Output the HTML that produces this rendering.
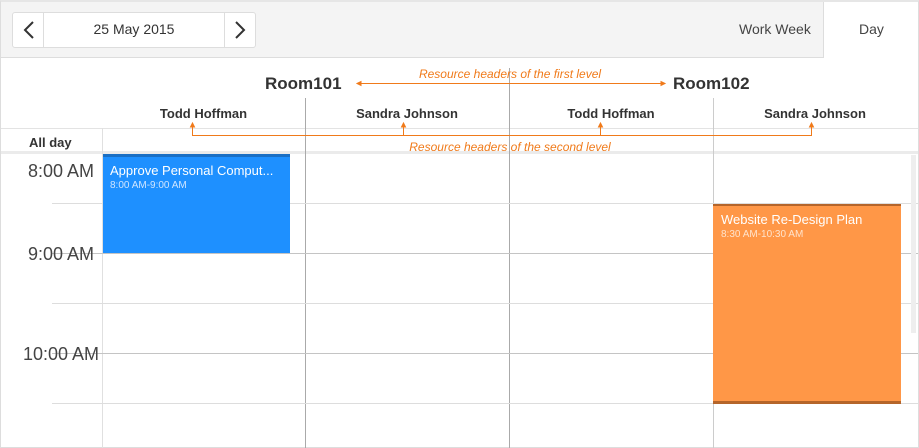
<!DOCTYPE html>
<html><head><meta charset="utf-8"><style>
*{margin:0;padding:0;box-sizing:border-box}
body{width:919px;height:448px;overflow:hidden;background:#fff;font-family:"Liberation Sans",sans-serif;color:#333;position:relative}
.a{position:absolute}
</style></head><body>
<div class="a" style="left:0;top:0;width:919px;height:448px;border:1px solid #ddd;border-top:2px solid #e6e6e6"></div>
<div class="a" style="left:1px;top:2px;width:917px;height:56px;background:#f4f4f4;border-bottom:1px solid #ddd"></div>
<div class="a" style="left:823px;top:2px;width:95px;height:56px;background:#fff;border-left:1px solid #ddd"></div>
<div class="a" style="left:12px;top:12px;width:244px;height:36px;background:#fff;border:1px solid #ddd;border-radius:3px"></div>
<div class="a" style="left:43px;top:13px;width:1px;height:34px;background:#ddd"></div>
<div class="a" style="left:224px;top:13px;width:1px;height:34px;background:#ddd"></div>
<svg class="a" style="left:0;top:0" width="919" height="448">
<polyline points="33,22 25,30 33,38" fill="none" stroke="#333" stroke-width="2"/>
<polyline points="236,22 244,30 236,38" fill="none" stroke="#333" stroke-width="2"/>
</svg>
<div class="a" style="left:44px;top:21px;width:180px;text-align:center;font-size:14px">25 May 2015</div>
<div class="a" style="left:739px;top:21px;font-size:14px;color:#444">Work Week</div>
<div class="a" style="left:859px;top:21px;font-size:14px;color:#444">Day</div>

<div class="a" style="left:265px;top:74px;font-size:17px;font-weight:bold">Room101</div>
<div class="a" style="left:673px;top:74px;font-size:17px;font-weight:bold">Room102</div>
<div class="a" style="left:102px;top:106px;width:203px;text-align:center;font-size:13px;font-weight:bold">Todd Hoffman</div>
<div class="a" style="left:305px;top:106px;width:204px;text-align:center;font-size:13px;font-weight:bold">Sandra Johnson</div>
<div class="a" style="left:509px;top:106px;width:204px;text-align:center;font-size:13px;font-weight:bold">Todd Hoffman</div>
<div class="a" style="left:713px;top:106px;width:204px;text-align:center;font-size:13px;font-weight:bold">Sandra Johnson</div>
<div class="a" style="left:29px;top:135px;font-size:13px;font-weight:bold">All day</div>

<div class="a" style="left:1px;top:128px;width:917px;height:1px;background:#e3e3e3"></div>
<div class="a" style="left:1px;top:151px;width:917px;height:3px;background:#ebebeb"></div>
<div class="a" style="left:102px;top:128px;width:1px;height:320px;background:#e0e0e0"></div>
<div class="a" style="left:305px;top:98px;width:1px;height:350px;background:#aaa"></div>
<div class="a" style="left:509px;top:68px;width:1px;height:380px;background:#aaa"></div>
<div class="a" style="left:713px;top:98px;width:1px;height:350px;background:#ccc"></div>

<div class="a" style="left:52px;top:203px;width:866px;height:1px;background:#ddd"></div>
<div class="a" style="left:52px;top:253px;width:866px;height:1px;background:#c4c4c4"></div>
<div class="a" style="left:52px;top:303px;width:866px;height:1px;background:#ddd"></div>
<div class="a" style="left:52px;top:353px;width:866px;height:1px;background:#c4c4c4"></div>
<div class="a" style="left:52px;top:403px;width:866px;height:1px;background:#ddd"></div>
<div class="a" style="left:911px;top:155px;width:5px;height:178px;background:#eee"></div>

<div class="a" style="left:0;top:161px;width:94px;text-align:right;font-size:18px;color:#444">8:00 AM</div>
<div class="a" style="left:0;top:244px;width:94px;text-align:right;font-size:18px;color:#444">9:00 AM</div>
<div class="a" style="left:0;top:344px;width:99px;text-align:right;font-size:18px;color:#444">10:00 AM</div>

<div class="a" style="left:103px;top:154px;width:187px;height:99px;background:#1e90ff;border-top:3px solid #1a6fc4;color:#fff;padding:6px 7px">
<div style="font-size:13px;white-space:nowrap;overflow:hidden">Approve Personal Comput...</div>
<div style="font-size:10px;color:#cfe5ff;margin-top:2px">8:00 AM-9:00 AM</div></div>
<div class="a" style="left:713px;top:204px;width:188px;height:200px;background:#ff9747;border-top:2px solid #b5652a;border-bottom:3px solid #b5652a;color:#fff;padding:6px 8px">
<div style="font-size:13px">Website Re-Design Plan</div>
<div style="font-size:10px;color:#ffe3cc;margin-top:2px">8:30 AM-10:30 AM</div></div>

<svg class="a" style="left:0;top:0" width="919" height="448" fill="none" stroke="#f07a1a" stroke-width="1">
<line x1="358" y1="83.5" x2="664" y2="83.5"/>
<polygon points="357,83.5 361,81.5 361,85.5" fill="#f07a1a"/>
<polygon points="665,83.5 661,81.5 661,85.5" fill="#f07a1a"/>
<polyline points="192.5,125 192.5,135.5 811.5,135.5 811.5,125"/>
<line x1="403.5" y1="125" x2="403.5" y2="135"/>
<line x1="600.5" y1="125" x2="600.5" y2="135"/>
<g fill="#f07a1a">
<polygon points="192.5,123 190.5,127 194.5,127"/><polygon points="403.5,123 401.5,127 405.5,127"/>
<polygon points="600.5,123 598.5,127 602.5,127"/><polygon points="811.5,123 809.5,127 813.5,127"/></g>
</svg>
<div class="a" style="left:360px;top:67px;width:300px;text-align:center;font-size:12px;font-style:italic;color:#f07a1a">Resource headers of the first level</div>
<div class="a" style="left:360px;top:140px;width:300px;text-align:center;font-size:12px;font-style:italic;color:#f07a1a">Resource headers of the second level</div>
</body></html>
